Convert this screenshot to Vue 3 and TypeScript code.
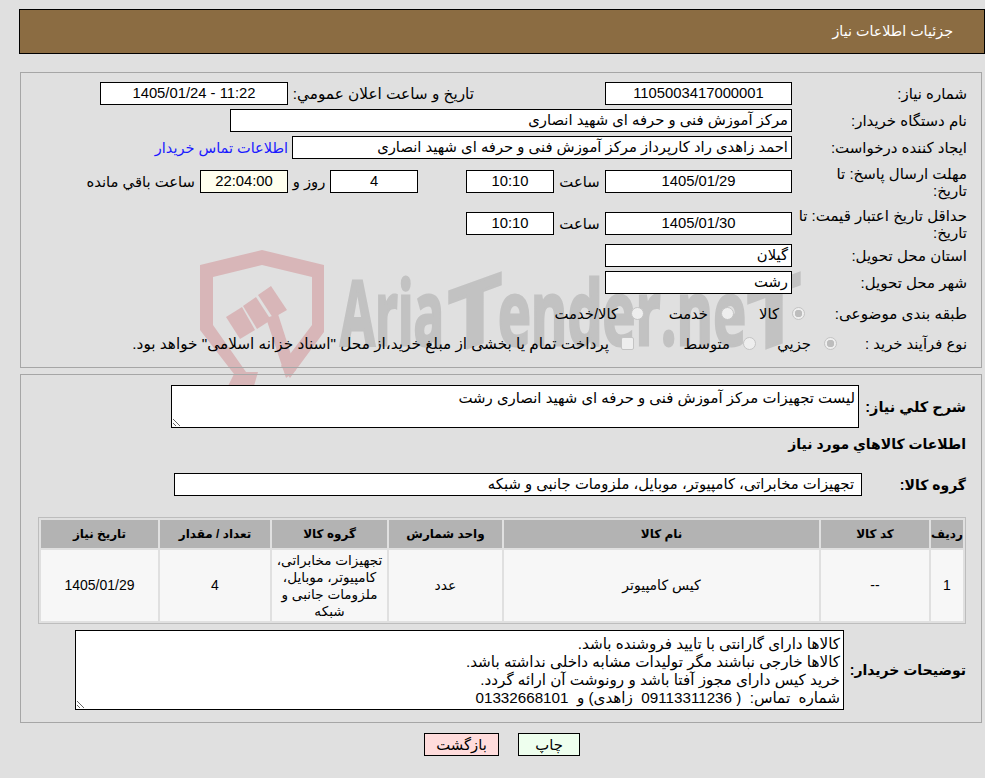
<script setup lang="ts">
const notes = [
  'کالاها دارای گارانتی با تایید فروشنده باشد.',
  'کالاها خارجی نباشند مگر تولیدات مشابه داخلی نداشته باشد.',
  'خرید کیس دارای مجوز آفتا باشد و رونوشت آن ارائه گردد.',
  'شماره  تماس:  ( 09113311236  زاهدی) و  01332668101'
].join('\n')
const summary = 'لیست تجهیزات مرکز آموزش فنی و حرفه ای شهید انصاری رشت'
const heads = ['ردیف', 'کد کالا', 'نام کالا', 'واحد شمارش', 'گروه کالا', 'تعداد / مقدار', 'تاریخ نیاز']
const widths = [32, 108, 315, 113, 115, 110, 117]
</script>

<template>
  <div class="page" dir="rtl">
    <svg class="mark" width="985" height="430" viewBox="0 0 985 430" aria-hidden="true">
      <g fill="#d8b6b8">
        <path d="M262 250 L324 265 V332 L290 378 L281 366 L312 325 V277 L262 265 L213 277 V325 L246 372 L258 372 L254 386 L228 386 L234 374 L200 330 V265 Z" />
        <path d="M226 317 L242 307 L255 330 L240 339 Z" />
        <path d="M243 306 L256 297 L271 320 L257 329 Z" />
        <path d="M258 295 L271 286 L287 310 L273 318 Z" />
        <path d="M266 318 L278 314 L296 370 L286 378 Z" />
      </g>
      <g class="mark-text" fill="#c2c2c2" stroke="#c2c2c2" stroke-width="3">
        <text x="340" y="345" font-size="90" textLength="104" lengthAdjust="spacingAndGlyphs">Aria</text>
        <text transform="translate(448 355) skewY(-20)" font-size="88" textLength="54" lengthAdjust="spacingAndGlyphs">T</text>
        <text x="498" y="345" font-size="90" textLength="248" lengthAdjust="spacingAndGlyphs">ender.ne</text>
        <text transform="translate(747 355) skewY(-20)" font-size="88" textLength="54" lengthAdjust="spacingAndGlyphs">T</text>
      </g>
    </svg>

    <header class="title">جزئیات اطلاعات نیاز</header>

    <section class="panel one">
      <div class="row">
        <label class="lbl">شماره نیاز:</label>
        <div class="fld w187 c">1105003417000001</div>
        <label class="pub">تاریخ و ساعت اعلان عمومي:</label>
        <div class="fld w188 c" dir="ltr">1405/01/24 - 11:22</div>
      </div>
      <div class="row">
        <label class="lbl">نام دستگاه خریدار:</label>
        <div class="fld w562">مرکز آموزش فنی و حرفه ای شهید انصاری</div>
      </div>
      <div class="row">
        <label class="lbl">ایجاد کننده درخواست:</label>
        <div class="fld w500">احمد زاهدی راد کارپرداز مرکز آموزش فنی و حرفه ای شهید انصاری</div>
        <a class="link">اطلاعات تماس خریدار</a>
      </div>
      <div class="row first-tall">
        <label class="lbl two">مهلت ارسال پاسخ: تا<br />تاریخ:</label>
        <div class="fld w187 c">1405/01/29</div>
        <span class="cell51">ساعت</span>
        <div class="fld w88 c">10:10</div>
        <span class="gap48"></span>
        <div class="fld w88 c">4</div>
        <span class="cell42">روز و</span>
        <div class="fld w88 c cream">22:04:00</div>
        <span class="rest">ساعت باقي مانده</span>
      </div>
      <div class="row second-tall">
        <label class="lbl two">حداقل تاریخ اعتبار قیمت: تا<br />تاریخ:</label>
        <div class="fld w187 c">1405/01/30</div>
        <span class="cell51">ساعت</span>
        <div class="fld w88 c">10:10</div>
      </div>
      <div class="row">
        <label class="lbl">استان محل تحویل:</label>
        <div class="fld w187">گیلان</div>
      </div>
      <div class="row">
        <label class="lbl">شهر محل تحویل:</label>
        <div class="fld w187">رشت</div>
      </div>
      <div class="row cat">
        <label class="lbl-cat">طبقه بندی موضوعی:</label>
        <span class="opt o1"><i class="radio on"></i>کالا</span>
        <span class="opt o2"><i class="radio"></i>خدمت</span>
        <span class="opt"><i class="radio"></i>کالا/خدمت</span>
      </div>
      <div class="row buy">
        <label class="lbl-buy">نوع فرآیند خرید :</label>
        <span class="opt p1"><i class="radio on"></i>جزيي</span>
        <span class="opt p2"><i class="radio"></i>متوسط</span>
        <span class="opt p3"><i class="check"></i>پرداخت تمام یا بخشی از مبلغ خرید،از محل "اسناد خزانه اسلامی" خواهد بود.</span>
      </div>
    </section>

    <section class="panel two-panel">
      <div class="row desc">
        <label class="blbl">شرح کلي نیاز:</label>
        <textarea class="area short" readonly :value="summary"></textarea>
      </div>
      <h2 class="heading">اطلاعات کالاهاي مورد نیاز</h2>
      <div class="row grp">
        <label class="blbl">گروه کالا:</label>
        <div class="fld group-field">تجهیزات مخابراتی، کامپیوتر، موبایل، ملزومات جانبی و شبکه</div>
      </div>
      <table class="items">
        <colgroup>
          <col v-for="w in widths" :key="w" :style="{ width: w + 'px' }" />
        </colgroup>
        <thead>
          <tr><th v-for="h in heads" :key="h">{{ h }}</th></tr>
        </thead>
        <tbody>
          <tr>
            <td>1</td>
            <td>--</td>
            <td>کیس کامپیوتر</td>
            <td>عدد</td>
            <td class="wrap">تجهیزات مخابراتی، کامپیوتر، موبایل، ملزومات جانبی و شبکه</td>
            <td>4</td>
            <td>1405/01/29</td>
          </tr>
        </tbody>
      </table>
      <div class="row note">
        <label class="blbl">توضیحات خریدار:</label>
        <textarea class="area long" readonly :value="notes"></textarea>
      </div>
    </section>

    <div class="actions">
      <button class="btn print">چاپ</button>
      <button class="btn back">بازگشت</button>
    </div>
  </div>
</template>

<style>
html, body { background: #e0e0e0; }
</style>

<style scoped>
.page {
  position: relative;
  width: 985px;
  height: 778px;
  box-sizing: border-box;
  padding-top: 9px;
  overflow: hidden;
  background: #e0e0e0;
  color: #000;
  font-family: "Liberation Sans", "DejaVu Sans", sans-serif;
  font-size: 14.8px;
}
.mark { position: absolute; left: 0; top: 0; direction: ltr; }
.mark-text { font-family: "Open Sans", sans-serif; font-weight: 700; }
.title {
  position: relative;
  box-sizing: border-box;
  width: 966px;
  height: 45px;
  margin-left: 19px;
  padding-right: 31px;
  line-height: 43px;
  background: #8b6c42;
  border: 1px solid #000;
  color: #fff;
  font-size: 14.3px;
}
.panel {
  position: relative;
  box-sizing: border-box;
  width: 962px;
  margin-right: 3px;
  border: 1px solid #a6a6a6;
}
.one { height: 296px; margin-top: 18px; padding: 9px 14px 0 0; }
.two-panel { height: 349px; margin-top: 6px; padding: 10px 15px 0 0; }
.row { display: flex; align-items: center; height: 23px; margin-bottom: 4px; }
.lbl { width: 175px; flex: none; font-size: 15px; white-space: nowrap; }
.two { line-height: 17px; }
.first-tall { margin-top: 11px; margin-bottom: 19px; }
.second-tall { margin-bottom: 9px; }
.fld {
  box-sizing: border-box;
  flex: none;
  height: 23px;
  line-height: 21px;
  padding: 0 3px;
  border: 1px solid #000;
  background: #fff;
  white-space: nowrap;
}
.c { text-align: center; }
.w187 { width: 187px; }
.w188 { width: 188px; }
.w562 { width: 562px; }
.w500 { width: 500px; }
.w88 { width: 88px; }
.cream { background: #ffffee; }
.pub { width: 317px; flex: none; box-sizing: border-box; padding-right: 131px; white-space: nowrap; font-size: 15.3px; }
.link { margin-right: 4px; color: #1a1aff; white-space: nowrap; font-size: 14.5px; }
.cell51 { width: 51px; flex: none; text-align: center; }
.cell42 { width: 42px; flex: none; text-align: center; }
.gap48 { width: 48px; flex: none; }
.rest { margin-right: 5px; white-space: nowrap; }
.cat { margin-top: 8px; margin-bottom: 7px; }
.lbl-cat { width: 162px; flex: none; white-space: nowrap; font-size: 15.2px; }
.lbl-buy { width: 130px; flex: none; white-space: nowrap; }
.opt { display: flex; align-items: center; flex: none; white-space: nowrap; }
.o1 { width: 71px; }
.o2 { width: 90px; }
.p1 { width: 81px; }
.p2 { width: 122px; }
.p3 { font-size: 15.3px; }
.radio, .check {
  display: block;
  flex: none;
  box-sizing: border-box;
  width: 13px;
  height: 13px;
  margin-left: 13px;
  border: 1px solid #c4c4c4;
  background: #eee;
}
.radio { border-radius: 50%; }
.check { border-radius: 2px; margin-left: 12px; }
.radio.on { background: radial-gradient(circle, #bdbdbd 0 3.5px, #eee 4px); }
.blbl { flex: none; font-weight: 700; font-size: 14px; white-space: nowrap; }
.desc { height: 43px; margin-bottom: 0; }
.desc .blbl { width: 107px; font-size: 14.5px; }
.area {
  display: block;
  box-sizing: border-box;
  flex: none;
  margin: 0;
  padding: 3px;
  border: 1px solid #000;
  border-radius: 0;
  outline: none;
  background: #fff;
  color: #000;
  overflow: hidden;
  font-family: "Liberation Sans", "DejaVu Sans", sans-serif;
  font-size: 14.9px;
  line-height: 18px;
  direction: rtl;
}
.short { width: 688px; height: 43px; }
.long { width: 769px; height: 80px; padding: 4px 3px 0; font-size: 15.2px; }
.heading { margin: 6px 0 0; height: 22px; line-height: 20px; font-size: 14px; font-weight: 700; }
.grp { margin-top: 17px; margin-bottom: 21px; }
.grp .blbl { width: 104px; }
.group-field { width: 688px; padding-right: 7px; }
.items {
  width: 928px;
  table-layout: fixed;
  border: 1px solid #bdbdbd;
  border-spacing: 2px;
  box-sizing: border-box;
}
.items th {
  height: 28px;
  padding: 0;
  background: #b3b3b3;
  font-size: 12px;
  font-weight: 700;
  white-space: nowrap;
}
.items td {
  height: 71px;
  padding: 0 2px;
  background: #f7f7f7;
  text-align: center;
  line-height: 17px;
  font-size: 14px;
}
.items td.wrap { font-size: 13.6px; }
.note { height: 80px; margin-top: 6px; margin-bottom: 0; }
.note .blbl { width: 122px; }
.actions { position: relative; display: flex; justify-content: center; gap: 19px; margin-top: 10px; padding-left: 19px; }
.btn {
  box-sizing: border-box;
  height: 23px;
  padding: 0;
  border: 1px solid #000;
  border-radius: 0;
  color: #000;
  font-family: "Liberation Sans", "DejaVu Sans", sans-serif;
  font-size: 14.8px;
}
.print { width: 62px; background: #eeffee; }
.back { width: 75px; background: #ffdcdc; }
</style>
